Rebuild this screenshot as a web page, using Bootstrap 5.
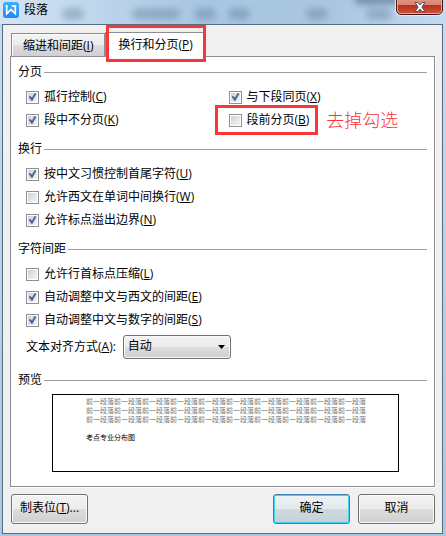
<!DOCTYPE html>
<html lang="zh-CN">
<head>
<meta charset="utf-8">
<meta name="viewport" content="width=device-width, initial-scale=1">
<title>段落</title>
<link href="https://cdn.jsdelivr.net/npm/bootstrap@5.3.0/dist/css/bootstrap.min.css" rel="stylesheet">
<style>
body{font:12px/16px "Open Sans","Noto Sans CJK SC",sans-serif;color:#000;background:#b9d1e8}
.dialog-window{padding:0 3px 2px 2px;background:linear-gradient(90deg,#d3e4f4,#a8c6e2 45%,#aac6e0 75%,#c3dbf2) 0 0/100% 24px no-repeat,linear-gradient(#c6dcf0,#a9c8e6)}
.title-bar{height:24px;position:relative;overflow:hidden}
.title-bar h1{font-size:12px;line-height:20px;font-weight:400}
.title-smudge{position:absolute;top:8px;height:12px;width:22px;border-radius:6px;background:#506f8e;opacity:.35;filter:blur(3px)}
.sm-a{left:60px}.sm-b{left:130px;width:48px}.sm-c{left:192px}.sm-d{left:226px}.sm-e{left:304px}.sm-f{left:364px;width:26px}
.sm-g{left:352px;top:-7px;width:50px;opacity:.6}
.title-close{position:absolute;top:-6px;right:0;width:47px;height:21px;padding:5px 0 0;border:1px solid #47181a;border-radius:0 0 5px 5px;background:linear-gradient(#e0a090 0,#d98672 50%,#b8301c 52%,#cf523b 100%);box-shadow:inset 0 0 0 1px #e9a79a,0 0 1px 1px #e4eef8;line-height:0}
.dialog-client{border:1px solid #596a7c;background:#f0f0f0;padding:7px 7px 9px}
.tab-strip{padding-left:1px}
.tab-item{border:1px solid #8c8c95;border-bottom:0;color:#000;padding:3px 11px;line-height:18px}
.tab-idle{background:linear-gradient(#f3f3f3,#ebebeb 48%,#dddddd 52%,#cfcfcf);height:23px;box-shadow:inset 1px 1px #fbfbfb}
.tab-active{background:#fff;height:25px;margin-bottom:-1px;padding:3px 12px;position:relative;z-index:1}
.mark-red{position:absolute;border:3px solid #fb3438;pointer-events:none;z-index:2}
.mark-tab{inset:-8px -1px -5px 0}
.mark-check{inset:-7px -9px -7px -14px}
.tab-panel{border:1px solid #8c8c95;background:#fff;padding:7px 7px 14px;box-shadow:1px 1px #fff}
.group-title{font-size:12px;line-height:16px;font-weight:400;gap:2px}
.group-title::after{content:"";flex:1;height:1px;background:#a0a0a0}
.option-stack{display:grid;gap:7px;padding:9px 0 13px 8px}
.option-side{padding-left:6px}
.option{display:inline-flex;align-items:center;gap:5px;height:16px;position:relative;white-space:nowrap;justify-self:start}
.option input{appearance:none;width:13px;height:13px;margin:0;border:1px solid #8e8f8f;background:linear-gradient(135deg,#cdd1d6,#f5f5f6) content-box #f4f4f4;padding:1px;flex:none}
.option input:checked{background:url("data:image/svg+xml,%3Csvg xmlns='http://www.w3.org/2000/svg' viewBox='0 0 11 11'%3E%3Cpath d='M2 5l1-1 2 2 3-5 1 1-4 7z' fill='%23435f9f' stroke='%23435f9f' stroke-width='.5'/%3E%3C/svg%3E") center/11px 11px no-repeat,linear-gradient(135deg,#cdd1d6,#f5f5f6) content-box #f4f4f4}
.note-text{font-size:18px;line-height:20px;font-weight:300;color:#fb3438;margin-left:12px}
.align-select{width:108px;height:24px;font-size:12px;line-height:16px;color:#000;border:1px solid #707070;border-radius:3px;padding:1px 20px 3px 4px;background:url("data:image/svg+xml,%3Csvg xmlns='http://www.w3.org/2000/svg' viewBox='0 0 7 4'%3E%3Cpath d='M0 0h7L3.500 4z'/%3E%3C/svg%3E") right 5px center/7px 4px no-repeat,linear-gradient(#f2f2f2,#ebebeb 49%,#dddddd 51%,#cfcfcf);box-shadow:inset 0 0 0 1px #fafafa}
.align-row{gap:7px}
.preview-box{border:1px solid #000;margin:6px 28px 0 34px;height:78px;padding:2px 32px 0 33px;font-size:7px;line-height:9px;overflow:hidden;white-space:nowrap}
.preview-box p{margin:0 0 9px;color:#777}
.preview-box p.current{color:#000}
.push{width:77px;height:30px;font-size:12px;line-height:16px;padding:0 0 2px;color:#000;border:1px solid #707070;border-radius:3px;background:linear-gradient(#f2f2f2,#ebebeb 49%,#dddddd 51%,#cfcfcf);box-shadow:inset 0 0 0 1px #fafafa}
.push-default{border-color:#3c7fb1;background:linear-gradient(#eef3f5,#e1e9ec 49%,#d0dade 51%,#c5d0d4);box-shadow:inset 0 0 0 1px #42d2f5}
.push-row{margin:7px 0 0 1px}
</style>
</head>
<body>
<main class="dialog-window d-flex flex-column min-vh-100">
  <header class="title-bar d-flex align-items-start">
    <span class="title-smudge sm-a"></span><span class="title-smudge sm-b"></span><span class="title-smudge sm-c"></span><span class="title-smudge sm-d"></span><span class="title-smudge sm-e"></span><span class="title-smudge sm-f"></span><span class="title-smudge sm-g"></span>
    <svg width="18" height="19" viewBox="0 0 18 19" aria-hidden="true"><defs><linearGradient id="logo" x2="0" y2="1"><stop stop-color="#38b2ff"/><stop offset="1" stop-color="#2388f5"/></linearGradient></defs><rect x="1" y="2" width="16" height="16" rx="3" fill="url(#logo)"/><path d="M3.500 6.200h2.200M4.700 6v7.800L9 9.500l4.300 4.300V6.200H9.800" fill="none" stroke="#fff" stroke-width="1.700"/></svg>
    <h1 class="mb-0 ms-1 position-relative">段落</h1>
    <button type="button" class="title-close" aria-label="关闭"><svg width="12" height="10" viewBox="0 0 12 10"><path d="M1 .5h3l2 2.500 2-2.500h3L7.800 5 11 9.500H8L6 7 4 9.500H1L4.200 5z" fill="#fff" stroke="#4d4f60"/></svg></button>
  </header>
  <div class="dialog-client flex-grow-1 d-flex flex-column">
    <div class="tab-strip d-flex align-items-end" role="tablist">
      <button type="button" class="tab-item tab-idle" role="tab" aria-selected="false">缩进和间距(<u>I</u>)</button>
      <button type="button" class="tab-item tab-active" role="tab" aria-selected="true">换行和分页(<u>P</u>)<span class="mark-red mark-tab"></span></button>
    </div>
    <section class="tab-panel flex-grow-1" role="tabpanel">
      <h2 class="group-title d-flex align-items-center mb-0">分页</h2>
      <div class="row g-0">
        <div class="col-6 option-stack">
          <label class="option"><input type="checkbox" checked><span>孤行控制(<u>C</u>)</span></label>
          <label class="option"><input type="checkbox" checked><span>段中不分页(<u>K</u>)</span></label>
        </div>
        <div class="col-6 option-stack option-side">
          <label class="option"><input type="checkbox" checked><span>与下段同页(<u>X</u>)</span></label>
          <div class="option">
            <label class="option"><input type="checkbox"><span>段前分页(<u>B</u>)</span><span class="mark-red mark-check"></span></label>
            <span class="note-text">去掉勾选</span>
          </div>
        </div>
      </div>
      <h2 class="group-title d-flex align-items-center mb-0">换行</h2>
      <div class="option-stack">
        <label class="option"><input type="checkbox" checked><span>按中文习惯控制首尾字符(<u>U</u>)</span></label>
        <label class="option"><input type="checkbox"><span>允许西文在单词中间换行(<u>W</u>)</span></label>
        <label class="option"><input type="checkbox" checked><span>允许标点溢出边界(<u>N</u>)</span></label>
      </div>
      <h2 class="group-title d-flex align-items-center mb-0">字符间距</h2>
      <div class="option-stack">
        <label class="option"><input type="checkbox"><span>允许行首标点压缩(<u>L</u>)</span></label>
        <label class="option"><input type="checkbox" checked><span>自动调整中文与西文的间距(<u>E</u>)</span></label>
        <label class="option"><input type="checkbox" checked><span>自动调整中文与数字的间距(<u>S</u>)</span></label>
        <div class="align-row d-flex align-items-center">
          <label for="align">文本对齐方式(<u>A</u>):</label>
          <select id="align" class="form-select align-select"><option>自动</option></select>
        </div>
      </div>
      <h2 class="group-title d-flex align-items-center mb-0">预览</h2>
      <div class="preview-box">
        <p>前一段落前一段落前一段落前一段落前一段落前一段落前一段落前一段落前一段落前一段落<br>前一段落前一段落前一段落前一段落前一段落前一段落前一段落前一段落前一段落前一段落<br>前一段落前一段落前一段落前一段落前一段落前一段落前一段落前一段落前一段落前一段落</p>
        <p class="current">考点专业分布图</p>
      </div>
    </section>
    <footer class="push-row d-flex gap-2">
      <button type="button" class="push me-auto">制表位(<u>T</u>)...</button>
      <button type="button" class="push push-default">确定</button>
      <button type="button" class="push">取消</button>
    </footer>
  </div>
</main>
<script src="https://cdn.jsdelivr.net/npm/bootstrap@5.3.0/dist/js/bootstrap.bundle.min.js"></script>
</body>
</html>
